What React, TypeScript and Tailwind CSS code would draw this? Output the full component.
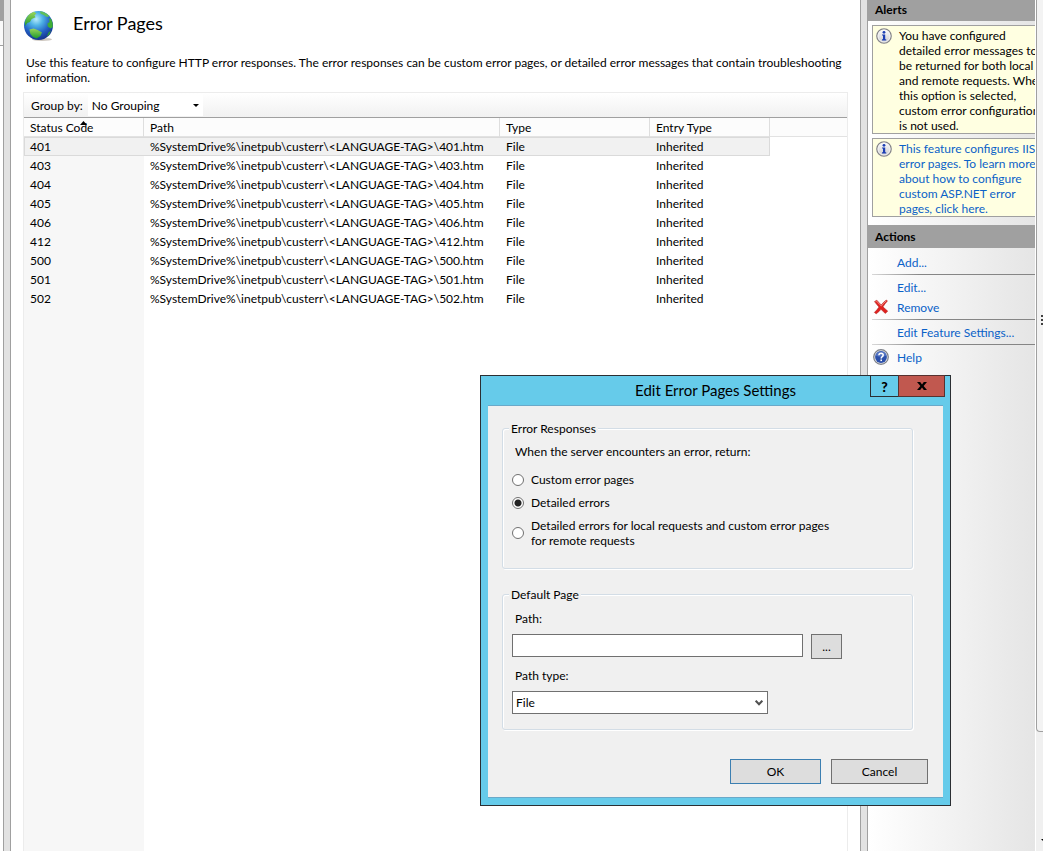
import { useState } from "react";

const rows = ["401", "403", "404", "405", "406", "412", "500", "501", "502"];

const InfoIcon = () => (
  <svg className="w-4 h-4 shrink-0" viewBox="0 0 16 16">
    <defs>
      <linearGradient id="infoFill" x1="0" y1="0" x2="0" y2="1">
        <stop offset="0" stopColor="#ffffff" />
        <stop offset="1" stopColor="#c9c9cd" />
      </linearGradient>
    </defs>
    <circle cx="8" cy="8" r="7.2" fill="url(#infoFill)" stroke="#85858a" strokeWidth="1.3" />
    <circle cx="8" cy="8" r="6" fill="none" stroke="#f4f4f4" strokeWidth="0.8" />
    <circle cx="8" cy="4.3" r="1.4" fill="#1c3fb4" />
    <path d="M6 6.4H9.2V11.2H10.2V12.4H6V11.2H7V7.6H6Z" fill="#1c3fb4" />
  </svg>
);

const HelpIcon = () => (
  <svg className="w-4 h-4" viewBox="0 0 16 16">
    <circle cx="8" cy="8" r="7.3" fill="#dfe1e6" stroke="#7d8088" strokeWidth="1.2" />
    <circle cx="8" cy="8" r="5.9" fill="#2b50ab" />
    <path d="M2.6 6.6a5.6 5.6 0 0 1 10.8 0Q8 9 2.6 6.6Z" fill="#6c8bd2" opacity="0.6" />
    <path d="M5.9 6.2Q6 4.3 8.1 4.3Q10.2 4.4 10.2 6.1Q10.2 7.2 9 7.9Q8.2 8.4 8.2 9.5" fill="none" stroke="#fff" strokeWidth="1.5" />
    <rect x="7.4" y="10.5" width="1.6" height="1.6" fill="#fff" />
  </svg>
);

const RemoveIcon = () => (
  <svg className="w-4 h-4" viewBox="0 0 16 16">
    <path d="M1.5 2.6L3.8 1.2Q6 3.8 8.2 5.9Q10.6 3 13.4 1L14.4 2Q11.8 4.8 10 7.8Q12.2 10.2 14.7 12.1L12.4 14.4Q10 12.4 8 10.3Q6 12.8 3.2 14.8L1.4 13.4Q4 11 6 8.1Q3.6 5.4 1.5 2.6Z" fill="#e0211f" stroke="#b3211f" strokeWidth="0.6" />
    <path d="M2.6 2.6L3.6 2.1Q6.5 5.5 8.3 7Q10.6 4 13.3 1.8" fill="none" stroke="#f58c84" strokeWidth="0.9" />
  </svg>
);

const GlobeIcon = () => (
  <svg className="w-8 h-8" viewBox="0 0 32 32">
    <defs>
      <radialGradient id="sea" cx="0.42" cy="0.28" r="0.75">
        <stop offset="0" stopColor="#b9ecfb" />
        <stop offset="0.3" stopColor="#4fb3e6" />
        <stop offset="0.65" stopColor="#2360c4" />
        <stop offset="1" stopColor="#132f86" />
      </radialGradient>
      <linearGradient id="land" x1="0" y1="0" x2="0" y2="1">
        <stop offset="0" stopColor="#9bd65a" />
        <stop offset="1" stopColor="#1f9a2c" />
      </linearGradient>
    </defs>
    <ellipse cx="19" cy="30.4" rx="10" ry="1.5" fill="#cfc8c0" />
    <circle cx="15.5" cy="16.5" r="14.5" fill="url(#sea)" />
    <path d="M1.8 13Q4 5 11 2.8L13.4 4.4L11.4 6.2L12.6 8.2L8.6 10L7 13L4.2 14L2.4 17Z" fill="url(#land)" />
    <path d="M17 2.2Q23 3 26.4 7.2L23.8 8L20.6 6L17.6 4.8Z" fill="#5fbf5a" />
    <path d="M26 9.4L28 9.8Q30 13.6 29.8 18L27.6 19.4L24.8 17.4L24.4 14.4L26.6 13Z" fill="#3fae35" />
    <path d="M6.4 20.4L10.6 19.4L14.6 21L19 23.6L17.4 27L13.6 29.4L10 28L7.4 25Z" fill="url(#land)" />
    <path d="M25.6 23.4L27.8 21.6L26.4 25.2L23.8 27.4Z" fill="#2fa133" />
  </svg>
);

const SidebarHeader = ({ children }) => (
  <h2 className="h-[23px] bg-[#a0a0a0] pl-[7px] font-bold leading-[23px]">{children}</h2>
);

const Separator = () => (
  <div className="h-[5px] pt-[2px] pl-1">
    <div className="h-px bg-linear-to-r from-[#d8d8d8] via-[#858585] via-30% to-[#858585]" />
  </div>
);

const Action = ({ label, icon = null }) => (
  <a href="#" className="flex h-5 items-center text-[#0b62c8]">
    <span className="w-[29px] shrink-0 pl-[5px]">{icon}</span>
    <span className="whitespace-nowrap">{label}</span>
  </a>
);

const GroupBox = ({ title, className = "", children }) => (
  <fieldset className={`rounded-[3px] border border-[#d3dde6] pl-[9px] shadow-[1px_1px_0_#fff,inset_1px_1px_0_#fff] ${className}`}>
    <legend className="-ml-[3px] bg-[#f0f0f0] px-[2px]">{title}</legend>
    {children}
  </fieldset>
);

const options = [
  { id: "custom", label: "Custom error pages" },
  { id: "detailed", label: "Detailed errors" },
  { id: "mixed", label: <>Detailed errors for local requests and custom error pages<br />for remote requests</> },
];

const SettingsDialog = () => {
  const [mode, setMode] = useState("detailed");

  return (
    <div role="dialog" aria-labelledby="dialog-title" className="absolute top-[375px] left-[480px] w-[471px] border border-[#2b2f33] bg-[#66cbea] px-[7px] pb-[7px]">
      <div className="relative h-[29px]">
        <h2 id="dialog-title" className="text-center text-[15px] leading-7 font-normal">Edit Error Pages Settings</h2>
        <div className="absolute -top-px -right-[2px] flex">
          <button aria-label="Help" className="flex h-[22px] w-[29px] items-center justify-center border border-[#2b2f33] text-[14px] font-black">?</button>
          <button aria-label="Close" className="-ml-px flex h-[22px] w-[47px] items-center justify-center border border-[#573230] bg-[#c1584f]">
            <svg className="h-2 w-[10px]" viewBox="0 0 10 8">
              <path d="M0 0H3.2L5 2.4L6.8 0H10L6.6 4L10 8H6.8L5 5.6L3.2 8H0L3.4 4Z" fill="#000" />
            </svg>
          </button>
        </div>
      </div>
      <form className="border-y border-[#6aa9c9] bg-[#f0f0f0] pt-[15px] pr-[15px] pb-[13px] pl-[14px]">
        <GroupBox title="Error Responses" className="mr-[15px] pb-5">
          <p className="mt-2 ml-[3px]">When the server encounters an error, return:</p>
          <div className="mt-[13px] flex flex-col gap-2">
            {options.map((o) => (
              <label key={o.id} className="flex items-center">
                <input
                  type="radio"
                  name="mode"
                  checked={mode === o.id}
                  onChange={() => setMode(o.id)}
                  className="mr-[7px] h-3 w-3 appearance-none rounded-full border border-[#707070] bg-white checked:bg-[radial-gradient(circle,#222_3px,#fff_4px)]"
                />
                <span>{o.label}</span>
              </label>
            ))}
          </div>
        </GroupBox>
        <GroupBox title="Default Page" className="mt-[18px] mr-[15px] pb-[15px]">
          <label htmlFor="path" className="mt-[9px] ml-[3px] block">Path:</label>
          <div className="mt-2 flex items-start gap-2">
            <input id="path" type="text" className="h-[23px] w-[291px] border border-[#707070] bg-white px-1" />
            <button type="button" className="h-[25px] w-[31px] border border-[#707070] bg-[#dddddd]">...</button>
          </div>
          <label htmlFor="path-type" className="mt-[9px] ml-[3px] block">Path type:</label>
          <div className="relative mt-2 w-64">
            <select id="path-type" className="block h-[23px] w-full appearance-none border border-[#707070] bg-white pl-[3px]">
              <option>File</option>
            </select>
            <svg className="pointer-events-none absolute top-[9px] right-[5px] h-[6px] w-2" viewBox="0 0 8 6">
              <path d="M0.7 0.7L4 4.3L7.3 0.7" fill="none" stroke="#505050" strokeWidth="2" />
            </svg>
          </div>
        </GroupBox>
        <div className="mt-[29px] flex justify-end gap-[10px]">
          <button type="button" className="h-[25px] w-[91px] border border-[#3c7fb1] bg-[#dddddd]">OK</button>
          <button type="button" className="h-[25px] w-[97px] border border-[#707070] bg-[#dddddd]">Cancel</button>
        </div>
      </form>
    </div>
  );
};

const ErrorTable = () => (
  <table className="w-[746px] table-fixed border-separate border-spacing-0 text-left">
    <colgroup>
      <col className="w-[120px]" />
      <col className="w-[356px]" />
      <col className="w-[150px]" />
      <col className="w-[120px]" />
    </colgroup>
    <thead>
      <tr className="h-[19px]">
        {["Status Code", "Path", "Type", "Entry Type"].map((h, i) => (
          <th key={h} className="relative border-r border-[#dedede] p-0 pl-[6px] font-normal">
            {h}
            {i === 0 && (
              <svg className="absolute top-[3px] left-14 h-1 w-[7px]" viewBox="0 0 7 4">
                <path d="M3.5 0L7 4H0Z" fill="#000" />
              </svg>
            )}
          </th>
        ))}
      </tr>
    </thead>
    <tbody>
      {rows.map((code, i) => (
        <tr key={code} className={i === 0 ? "h-[19px] bg-[#f1f1f1] outline -outline-offset-1 outline-[#dadada]" : "h-[19px]"}>
          <td className="p-0 pl-[6px]">{code}</td>
          <td className="p-0 pl-[6px]">{`%SystemDrive%\\inetpub\\custerr\\<LANGUAGE-TAG>\\${code}.htm`}</td>
          <td className="p-0 pl-[6px]">File</td>
          <td className="p-0 pl-[6px]">Inherited</td>
        </tr>
      ))}
    </tbody>
  </table>
);

export default function App() {
  return (
    <div className="relative flex min-h-screen overflow-hidden bg-white font-['Lato','Open_Sans',sans-serif] text-[12px] leading-[15px] text-black">
      <div className="w-[3px] shrink-0">
        <div className="h-[21px] bg-[#a0a0a0]" />
        <div className="h-[25px] border-b border-[#a0a0a0] bg-[#fafafa]" />
      </div>
      <div className="w-2 shrink-0 border-x border-[#a0a0a0] bg-[#e2e2e2]" />

      <main className="flex min-w-0 flex-1 flex-col pr-3 pl-3">
        <header className="flex items-start pt-[9px]">
          <GlobeIcon />
          <h1 className="ml-[18px] pt-1 text-[18px] leading-5">Error Pages</h1>
        </header>
        <p className="mt-[14px] ml-[3px]">
          Use this feature to configure HTTP error responses. The error responses can be custom error pages, or detailed error messages that contain troubleshooting information.
        </p>
        <div className="mt-[7px] flex flex-1 flex-col border border-b-0 border-[#ececec]">
          <div className="flex h-[25px] items-center border-b border-[#a0a0a0] bg-linear-to-b from-white to-[#f1f1f1] pl-[7px]">
            <label htmlFor="group-by">Group by:</label>
            <div className="relative ml-[5px] w-[115px]">
              <select id="group-by" className="block h-[22px] w-full appearance-none bg-white pl-1">
                <option>No Grouping</option>
              </select>
              <svg className="pointer-events-none absolute top-[10px] right-1 h-[3px] w-[6px]" viewBox="0 0 6 3">
                <path d="M0 0H6L3 3Z" fill="#000" />
              </svg>
            </div>
          </div>
          <div className="flex-1 bg-[linear-gradient(#e2e2e2,#e2e2e2),linear-gradient(#fcfcfc,#fcfcfc),linear-gradient(#f7f7f7,#f7f7f7)] bg-[length:100%_1px,100%_18px,120px_100%] bg-[position:0_18px,0_0,0_0] bg-no-repeat">
            <ErrorTable />
          </div>
        </div>
      </main>

      <div className="w-2 shrink-0 border-x border-[#a0a0a0] bg-[#e2e2e2]" />
      <aside className="w-[167px] shrink-0 overflow-hidden bg-linear-to-r from-white to-[#e5e5e5]">
        <div className="-mt-[2px]">
          <SidebarHeader>Alerts</SidebarHeader>
        </div>
        <div className="mt-1 ml-1 flex gap-[7px] border border-r-0 border-[#a0a0a0] bg-[#ffffe1] pt-[2px] pl-[3px]">
          <InfoIcon />
          <p className="whitespace-nowrap">
            You have configured<br />detailed error messages to<br />be returned for both local<br />and remote requests. When<br />this option is selected,<br />custom error configuration<br />is not used.
          </p>
        </div>
        <div className="mt-1 ml-1 flex gap-[7px] border border-r-0 border-[#a0a0a0] bg-[#ffffe1] pt-[2px] pl-[3px]">
          <InfoIcon />
          <a href="#" className="block whitespace-nowrap text-[#0b62c8]">
            This feature configures IIS<br />error pages. To learn more<br />about how to configure<br />custom ASP.NET error<br />pages, click here.
          </a>
        </div>
        <div className="mt-2">
          <SidebarHeader>Actions</SidebarHeader>
        </div>
        <nav className="pt-1">
          <Action label="Add..." />
          <Separator />
          <Action label="Edit..." />
          <Action label="Remove" icon={<RemoveIcon />} />
          <Separator />
          <Action label="Edit Feature Settings..." />
          <Separator />
          <Action label="Help" icon={<HelpIcon />} />
        </nav>
      </aside>

      {/* outer scroll bar, cut by the window edge */}
      <div className="relative w-2 shrink-0 border-l border-white bg-[#f0f0f0]">
        <div className="h-[732px] rounded-bl-sm border-b border-l border-[#a0a0a0] bg-[#f3f3f3]" />
        <div className="absolute top-[315px] right-0 flex flex-col gap-[2px]">
          <i className="h-[2px] w-[2px] bg-[#404040]" />
          <i className="h-[2px] w-[2px] bg-[#404040]" />
          <i className="h-[2px] w-[2px] bg-[#404040]" />
        </div>
        <svg className="absolute top-[839px] right-0 h-[2px] w-[2px]" viewBox="0 0 2 2">
          <path d="M0 0H2V2Z" fill="#000" />
        </svg>
      </div>

      <SettingsDialog />
    </div>
  );
}
